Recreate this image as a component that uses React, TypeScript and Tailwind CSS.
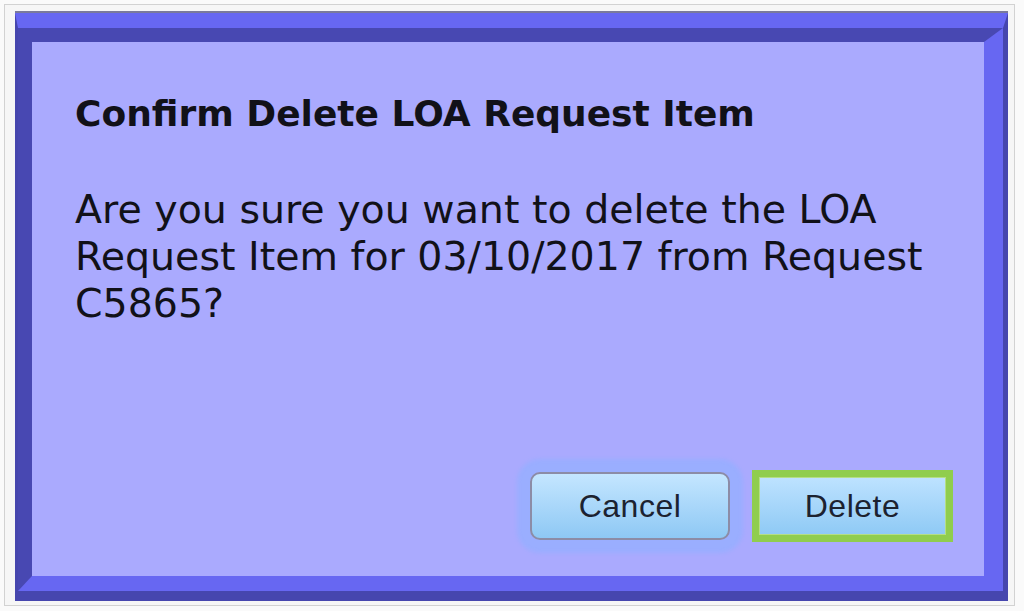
import React from 'react';

export default function App() {
  return (
    <div className="w-[1024px] h-[611px] bg-[#fafafa] pt-[4px] pl-[4px]">
      <div className="w-[1011px] h-[602px] border border-[#d2d2d2] bg-[#f6f6f6] pt-[6px] pl-[10px]">
        <ConfirmDialog />
      </div>
    </div>
  );
}

function ConfirmDialog() {
  return (
    <div className="w-[993px] h-[590px] border-t-[2px] border-[#7a7a9c]">
      <div className="h-full border-t-[15px] border-r-[5px] border-b-[10px] border-l-[3px] border-t-[#6767f2] border-r-[#4646ae] border-b-[#4646ae] border-l-[#4646ae]">
        <div className="h-full border-t-[14px] border-l-[14px] border-r-[19px] border-b-[15px] border-t-[#4848b2] border-l-[#4848b2] border-r-[#6767f2] border-b-[#6767f2]">
          <div className="h-full flex flex-col bg-[#aaaafe] pl-[43px] pr-[31px] pt-[51px] pb-[34px] text-[#111118] [font-family:'DejaVu_Sans',sans-serif]">
            <h1 className="text-[36px] leading-[42px] font-bold">Confirm Delete LOA Request Item</h1>
            <p className="mt-[51px] text-[39.5px] leading-[47px]">
              Are you sure you want to delete the LOA Request Item for 03/10/2017 from Request C5865?
            </p>
            <div className="flex-1" />
            <div className="flex items-center justify-end gap-[22px] [font-family:'Liberation_Sans',Arial,sans-serif] text-[32px] tracking-[0.5px] text-[#1c2230]">
              <button className="w-[200px] h-[68px] rounded-[10px] border-2 border-[#8c8ca6] bg-gradient-to-b from-[#c4e6ff] to-[#8ec8f4] shadow-[0_0_4px_13px_#9aaeff]">
                Cancel
              </button>
              <div className="w-[201px] h-[72px] border-[7px] border-[#90cd4e] shadow-[inset_0_0_0_1px_#7ab83a]">
                <button className="w-full h-full border border-[#b5de86] bg-gradient-to-b from-[#bde2ff] to-[#8fcaf5]">
                  Delete
                </button>
              </div>
            </div>
          </div>
        </div>
      </div>
    </div>
  );
}
